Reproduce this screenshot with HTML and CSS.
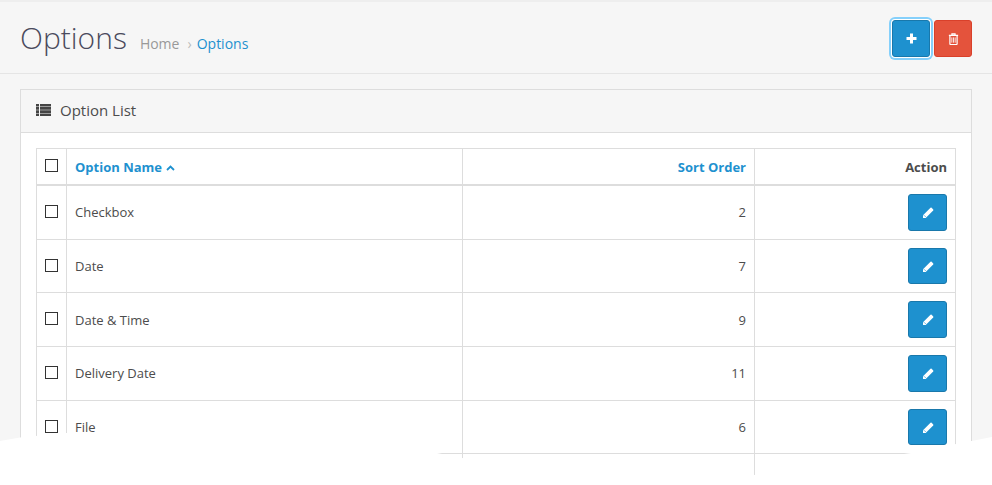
FILE: index.html
```html
<!DOCTYPE html>
<html lang="en">
<head>
    <meta charset="UTF-8">
    <meta name="viewport" content="width=device-width, initial-scale=1.0">
    <title>Options</title>
    <link rel="stylesheet" href="styles.css">
</head>
<body>
    <header class="page-header">
        <div class="page-title">
            <h1>Options</h1>
            <ul class="breadcrumb">
                <li><a class="crumb-home" href="#">Home</a></li>
                <li class="crumb-sep">›</li>
                <li><a href="#">Options</a></li>
            </ul>
        </div>
        <div class="page-actions">
            <button class="btn btn-primary btn-focus" type="button">
                <svg class="icon" width="11" height="11" viewBox="0 0 11 11"><path d="M4 0.500h3v3.500h3.500v3h-3.500v3.500h-3v-3.500h-3.500v-3h3.500z" fill="#fff"/></svg>
            </button>
            <button class="btn btn-danger" type="button">
                <svg class="icon" width="11" height="12" viewBox="0 0 11 13"><path d="M3.800 2.200V1h3.400v1.200M0.500 2.600h10M1.600 2.600v9.100c0 .5.300.8.800.8h6.200c.5 0 .8-.3.8-.8V2.600" fill="none" stroke="#fff" stroke-width="1.300"/><path d="M3.700 4.800v5.700M5.500 4.800v5.700M7.300 4.800v5.700" fill="none" stroke="#fff" stroke-width=".9"/></svg>
            </button>
        </div>
    </header>

    <main class="container">
        <section class="panel">
            <div class="panel-heading">
                <svg class="icon" width="15" height="12" viewBox="0 0 15 12" fill="#444">
                    <path d="M0 0h3v2.500H0zM4 0h11v2.500H4zM0 3h3v2.700H0zM4 3h11v2.700H4zM0 6.300h3V9H0zM4 6.300h11V9H4zM0 9.500h3V12H0zM4 9.500h11V12H4z"/>
                </svg>
                <h3>Option List</h3>
            </div>
            <div class="panel-body">
                <table class="list">
                    <thead>
                        <tr>
                            <th class="col-check"><input class="check" type="checkbox"></th>
                            <th class="col-name"><a href="#">Option Name
                                <svg class="icon sort-arrow" width="9" height="6" viewBox="0 0 9 6"><path d="M1 5l3.500-3.500L8 5" fill="none" stroke="#1e91cf" stroke-width="1.800"/></svg></a></th>
                            <th class="col-sort"><a href="#">Sort Order</a></th>
                            <th class="col-action">Action</th>
                        </tr>
                    </thead>
                    <tbody id="rows"></tbody>
                </table>
            </div>
        </section>
    </main>

    <svg class="torn-edge" width="992" height="485" viewBox="0 0 992 485">
        <polygon points="0,441 20,437.500 66,433 100,433 437,453 462,458 754,475 911,453 956,444 992,437 992,485 0,485" fill="#fff"/>
    </svg>

    <script>
        const options = [
            { name: "Checkbox", sort: 2 },
            { name: "Date", sort: 7 },
            { name: "Date & Time", sort: 9 },
            { name: "Delivery Date", sort: 11 },
            { name: "File", sort: 6 },
        ];

        const pencil = `<svg class="icon icon-pencil" width="12" height="12" viewBox="0 0 12 12"><path d="M8.500 0.800a.8.8 0 0 1 1.100 0l1.600 1.600a.8.8 0 0 1 0 1.100L3.700 11H1v-2.700z" fill="#fff"/><path d="M2.200 8.400l1.400 1.400" stroke="#1e91cf" stroke-width=".8"/></svg>`;

        const rows = document.getElementById('rows');
        options.forEach(option => {
            const row = document.createElement('tr');
            row.innerHTML = `
                <td><input class="check" type="checkbox"></td>
                <td>${option.name.replace('&', '&amp;')}</td>
                <td class="num">${option.sort}</td>
                <td class="num"><button class="btn btn-primary" type="button">${pencil}</button></td>
            `;
            rows.appendChild(row);
        });

        // last row runs under the torn edge, its content can't be seen
        const last = document.createElement('tr');
        last.className = 'empty-row';
        last.innerHTML = '<td></td><td></td><td></td><td></td>';
        rows.appendChild(last);
    </script>
</body>
</html>
```

FILE: styles.css
```css
:root {
    --primary-color: #1e91cf;
    --primary-border: #1978ab;
    --danger-color: #e4533c;
    --danger-border: #d9402a;
    --text-color: #4c4c4c;
    --line-color: #ddd;
    --background-color: #f6f6f6;
}

html, body {
    height: 485px;
    overflow: hidden;
}

body {
    font-family: 'Open Sans', sans-serif;
    font-size: 13px;
    margin: 0;
    padding: 0;
    background-color: var(--background-color);
    color: var(--text-color);
    border-top: 2px solid #eee;
    box-sizing: border-box;
    position: relative;
}

a {
    color: var(--primary-color);
    text-decoration: none;
}

.icon {
    display: inline-block;
    vertical-align: middle;
}

.icon-pencil {
    margin-top: 1px;
}

.sort-arrow {
    margin-left: 1px;
}

.page-header {
    display: flex;
    justify-content: space-between;
    align-items: flex-start;
    height: 72px;
    padding: 18px 20px 0 20px;
    box-sizing: border-box;
    border-bottom: 1px solid #e5e5e5;
}

.page-title {
    display: flex;
    align-items: baseline;
}

.page-title h1 {
    margin: 0;
    font-size: 30px;
    font-weight: 300;
    line-height: 36px;
    color: #4a4a5c;
}

.breadcrumb {
    display: flex;
    list-style-type: none;
    margin: 0 0 0 13px;
    padding: 0;
    font-size: 14px;
}

.crumb-home {
    color: #999;
}

.crumb-sep {
    color: #bbb;
    margin: 0 5px 0 8px;
}

.page-actions {
    display: flex;
    gap: 4px;
}

.btn {
    display: flex;
    align-items: center;
    justify-content: center;
    width: 39px;
    height: 36.700px;
    padding: 0;
    border: 1px solid;
    border-radius: 3px;
    box-sizing: border-box;
}

.btn-primary {
    background-color: var(--primary-color);
    border-color: var(--primary-border);
}

.btn-danger {
    width: 38px;
    height: 37px;
    background-color: var(--danger-color);
    border-color: var(--danger-border);
}

.btn-focus {
    width: 38px;
    height: 37px;
    box-shadow: 0 0 0 1px #fff, 0 0 0 3px #85d0fb;
}

.container {
    padding: 15px 20px 0 20px;
}

.panel {
    background-color: white;
    border: 1px solid var(--line-color);
}

.panel-heading {
    display: flex;
    align-items: center;
    gap: 9px;
    height: 43px;
    padding: 0 15px 3px 15px;
    box-sizing: border-box;
    background-color: var(--background-color);
    border-bottom: 1px solid var(--line-color);
}

.panel-heading h3 {
    margin: 0;
    font-size: 15px;
    font-weight: 400;
}

.panel-body {
    padding: 15px;
}

.list {
    width: 920px;
    table-layout: fixed;
    border-collapse: collapse;
}

.list th, .list td {
    border: 1px solid var(--line-color);
    padding: 8px;
    vertical-align: middle;
    text-align: left;
}

.list thead th {
    border-bottom-width: 2px;
    height: 19px;
    font-weight: 700;
}

.list td {
    height: 36.700px;
}

.col-check {
    width: 13px;
}

.col-name {
    width: 379px;
}

.col-sort {
    width: 275px;
    text-align: right !important;
}

.col-action {
    text-align: right !important;
}

.list .num {
    text-align: right;
}

.list .num .btn {
    margin-left: auto;
}

.check {
    appearance: none;
    display: block;
    width: 13px;
    height: 13px;
    margin: 0 0 2px 0;
    background: white;
    border: 1px solid #333;
}

.empty-row td {
    height: 40px;
}

.torn-edge {
    position: absolute;
    top: -2px;
    left: 0;
}
```
